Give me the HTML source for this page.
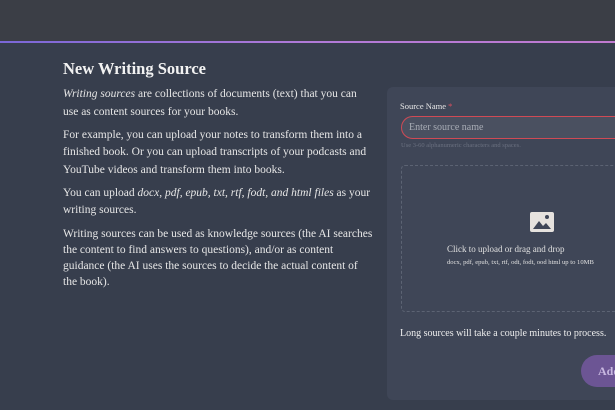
<!DOCTYPE html>
<html><head><style>
body{margin:0;width:615px;height:410px;overflow:hidden;background:#373e4d;font-family:"Liberation Serif",serif;position:relative}
.top{position:absolute;left:0;top:0;width:615px;height:41px;background:#3b3e46}
.line{position:absolute;left:0;top:41px;width:615px;height:2px;background:linear-gradient(90deg,#7a67d8,#b07ad8,#c07ad0)}
h1{position:absolute;left:63px;top:59px;margin:0;font-size:16.5px;color:#f2f2f2;font-weight:bold}
.txt{position:absolute;left:63px;top:86px;color:#e6e6e6;font-size:11.5px;line-height:17.5px;white-space:nowrap}
.txt p{margin:0 0 5.5px}
.panel{position:absolute;left:387px;top:87px;width:240px;height:313px;background:#3f4657;border-radius:6px}
.lbl{position:absolute;left:13px;top:14px;font-size:8.5px;color:#e8e8e8}
.lbl span{color:#e05060}
.inp{position:absolute;left:14px;top:29px;width:240px;height:23px;border:1.5px solid #d04a55;border-radius:12px;background:#4a5060;box-sizing:border-box;color:#a8acb5;font-size:10px;padding:5px 0 0 7px}
.hint{position:absolute;left:14px;top:55px;font-size:6.5px;color:#6b7180}
.drop{position:absolute;left:14px;top:78px;width:240px;height:147px;border:1px dashed #5c6373;border-radius:4px;box-sizing:border-box}
.c1{position:absolute;left:60px;top:157px;font-size:9px;color:#e0e0e0}
.c2{position:absolute;left:60px;top:172px;font-size:6.6px;color:#e0e0e0;white-space:nowrap}
.long{position:absolute;left:13px;top:241px;font-size:10px;color:#eee;white-space:nowrap}
.btn{position:absolute;left:194px;top:268px;width:60px;height:32px;border-radius:16px;background:#6c5594;color:#c8b8e0;font-weight:bold;font-size:12px;padding:9px 0 0 17px;box-sizing:border-box}
</style></head><body>
<div class="top"></div><div class="line"></div>
<h1>New Writing Source</h1>
<div class="txt">
<p><i>Writing sources</i> are collections of documents (text) that you can<br>use as content sources for your books.</p>
<p>For example, you can upload your notes to transform them into a<br>finished book. Or you can upload transcripts of your podcasts and<br>YouTube videos and transform them into books.</p>
<p style="margin-bottom:6.5px">You can upload <i>docx, pdf, epub, txt, rtf, fodt, and html files</i> as your<br>writing sources.</p>
<p style="line-height:16px">Writing sources can be used as knowledge sources (the AI searches<br>the content to find answers to questions), and/or as content<br>guidance (the AI uses the sources to decide the actual content of<br>the book).</p>
</div>
<div class="panel">
<div class="lbl">Source Name <span>*</span></div>
<div class="inp">Enter source name</div>
<div class="hint">Use 3-60 alphanumeric characters and spaces.</div>
<div class="drop"></div>
<svg style="position:absolute;left:143px;top:125px" width="24" height="20" viewBox="0 0 24 20"><rect x="0" y="0" width="24" height="20" rx="2" fill="#e6e2de"/><path d="M3 17 L9 9 L13 14 L16 11 L21 17 Z" fill="#3f4657"/><circle cx="17" cy="5" r="2" fill="#3f4657"/></svg>
<div class="c1">Click to upload or drag and drop</div>
<div class="c2">docx, pdf, epub, txt, rtf, odt, fodt, ood html up to 10MB</div>
<div class="long">Long sources will take a couple minutes to process.</div>
<div class="btn">Add</div>
</div>
</body></html>
